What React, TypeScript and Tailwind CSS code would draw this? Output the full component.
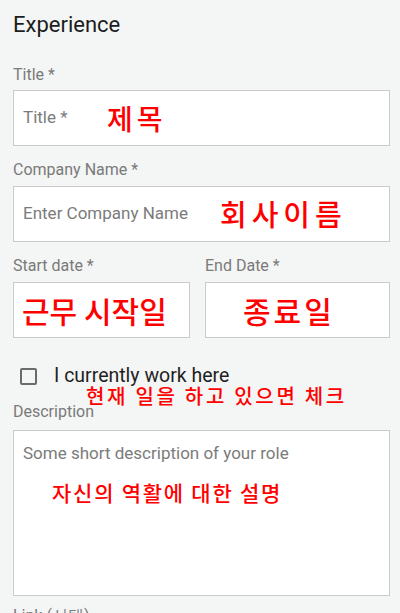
const roboto = "font-['Roboto',_'Noto_Sans',_sans-serif]";
const kr = "font-['Noto_Sans_CJK_KR',_sans-serif]";

function Label({ children }: { children: React.ReactNode }) {
  return <p className="h-5 text-[16px] leading-5 text-[#7a7a7a]">{children}</p>;
}

function Box({
  placeholder,
  note,
  noteClass,
  className = "",
}: {
  placeholder?: string;
  note: string;
  noteClass: string;
  className?: string;
}) {
  return (
    <div
      className={`relative mt-[6px] flex h-[56px] items-center border border-[#cbcbcb] bg-white pl-[9px] ${className}`}
    >
      {placeholder && <span className="text-[17px] text-[#7b7b7b]">{placeholder}</span>}
      <span
        className={`absolute top-1/2 -translate-y-1/2 whitespace-nowrap font-medium text-[#ff0000] ${kr} ${noteClass}`}
      >
        {note}
      </span>
    </div>
  );
}

export default function App() {
  return (
    <div className={`h-[613px] w-[400px] overflow-hidden bg-[#f4f5f5] pl-[13px] pr-[10px] pt-[12px] ${roboto}`}>
      <h2 className="text-[22px] leading-[26px] text-[#1d1d1d]">Experience</h2>

      <div className="mt-[27px]">
        <Label>Title *</Label>
        <Box
          placeholder="Title *"
          note="제목"
          noteClass="left-[93px] text-[28px] tracking-[4px]"
          className="!mt-[5px]"
        />
      </div>

      <div className="mt-[14px]">
        <Label>Company Name *</Label>
        <Box
          placeholder="Enter Company Name"
          note="회사이름"
          noteClass="left-[206px] text-[29px] tracking-[5px]"
          className="h-[55px]"
        />
      </div>

      <div className="mt-[14px] grid grid-cols-[177px_185px] gap-[15px]">
        <div>
          <Label>Start date *</Label>
          <Box note="근무 시작일" noteClass="left-[8px] text-[30px]" />
        </div>
        <div>
          <Label>End Date *</Label>
          <Box note="종료일" noteClass="left-[37px] text-[30px] tracking-[3px]" />
        </div>
      </div>

      <div className="relative mt-[27px] flex items-center gap-[17px] pl-[7px]">
        <span className="h-[17px] w-[17px] rounded-[2px] border-2 border-[#6b6b6b]" />
        <span className="text-[19.5px] leading-[22px] text-[#1f1f1f]">I currently work here</span>
        <span
          className={`absolute left-[73px] top-[19px] whitespace-nowrap text-[20px] font-medium leading-[24px] tracking-[2.7px] text-[#ff0000] ${kr}`}
        >
          현재 일을 하고 있으면 체크
        </span>
      </div>

      <div className="mt-[15px]">
        <Label>Description</Label>
        <div className="relative mt-[8px] h-[166px] border border-[#cbcbcb] bg-white px-[9px] pt-[10px]">
          <span className="text-[17px] text-[#7b7b7b]">Some short description of your role</span>
          <span
            className={`absolute left-[38px] top-[46px] whitespace-nowrap text-[21px] font-medium tracking-[1.75px] text-[#ff0000] ${kr}`}
          >
            자신의 역활에 대한 설명
          </span>
        </div>
      </div>

      <div className="mt-[10px]">
        <Label>Link (선택)</Label>
      </div>
    </div>
  );
}
